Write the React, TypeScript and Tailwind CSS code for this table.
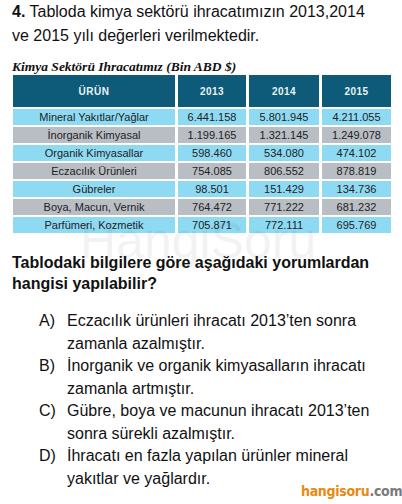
const rows = [
  { name: 'Mineral Yakıtlar/Yağlar', v: ['6.441.158', '5.801.945', '4.211.055'] },
  { name: 'İnorganik Kimyasal', v: ['1.199.165', '1.321.145', '1.249.078'] },
  { name: 'Organik Kimyasallar', v: ['598.460', '534.080', '474.102'] },
  { name: 'Eczacılık Ürünleri', v: ['754.085', '806.552', '878.819'] },
  { name: 'Gübreler', v: ['98.501', '151.429', '134.736'] },
  { name: 'Boya, Macun, Vernik', v: ['764.472', '771.222', '681.232'] },
  { name: 'Parfümeri, Kozmetik', v: ['705.871', '772.111', '695.769'] },
];

const options = [
  { key: 'A)', lines: ['Eczacılık ürünleri ihracatı 2013’ten sonra', 'zamanla azalmıştır.'] },
  { key: 'B)', lines: ['İnorganik ve organik kimyasalların ihracatı', 'zamanla artmıştır.'] },
  { key: 'C)', lines: ['Gübre, boya ve macunun ihracatı 2013’ten', 'sonra sürekli azalmıştır.'] },
  { key: 'D)', lines: ['İhracatı en fazla yapılan ürünler mineral', 'yakıtlar ve yağlardır.'] },
];

export default function App() {
  return (
    <div className="relative w-[402px] h-[504px] overflow-hidden bg-white px-3 text-[#111] font-['Liberation_Sans',Arial,sans-serif]">
      <p className="text-[16px] leading-[24px]">
        <span className="font-bold">4.</span> Tabloda kimya sektörü ihracatımızın 2013,2014
        <br />
        ve 2015 yılı değerleri verilmektedir.
      </p>

      <div className="mt-[11px] text-[13.5px] leading-[15px] font-bold italic font-['Liberation_Serif','Times_New_Roman',serif] text-[#111]">
        Kimya Sektörü Ihracatımız (Bin ABD $)
      </div>

      <div className="mt-[1px] ml-[1px] grid grid-cols-[162px_68px_70px_69px] gap-x-[3px] gap-y-[2px] text-center">
        {['ÜRÜN', '2013', '2014', '2015'].map((h) => (
          <div
            key={h}
            className="h-[32px] flex items-center justify-center bg-[#0d5b78] text-[10px] font-bold tracking-[0.5px] text-[#e8f2f6]"
          >
            {h}
          </div>
        ))}
        {rows.map((r, i) => {
          const bg = i % 2 === 0 ? 'bg-[#8fdaf3]' : 'bg-[#b9bdc4]';
          return [r.name, ...r.v].map((c, j) => (
            <div
              key={`${i}-${j}`}
              className={`${bg} h-[16px] flex items-center justify-center text-[11px] text-[#222]`}
            >
              {c}
            </div>
          ));
        })}
      </div>

      <p className="mt-[19px] text-[16px] leading-[21px] font-bold">
        Tablodaki bilgilere göre aşağıdaki yorumlardan
        <br />
        hangisi yapılabilir?
      </p>

      <div className="mt-[16px] pl-[27px] text-[16px] leading-[22.5px]">
        {options.map((o) => (
          <div key={o.key} className="flex">
            <span className="w-[28px] shrink-0">{o.key}</span>
            <span>
              {o.lines[0]}
              <br />
              {o.lines[1]}
            </span>
          </div>
        ))}
      </div>

      {/* watermark */}
      <div className="pointer-events-none absolute left-[80px] top-[216px] text-[50px] leading-[50px] text-black/[0.05]">
        HangiSoru
      </div>

      <div className="absolute left-[301px] top-[482px] text-[14px] leading-[18px] font-bold tracking-[-0.3px] font-['DejaVu_Sans_Condensed','Liberation_Sans_Narrow',sans-serif]">
        <span className="text-[#e88a12]">hangisoru</span>
        <span className="text-[#7a7a7a]">.com</span>
      </div>
    </div>
  );
}
